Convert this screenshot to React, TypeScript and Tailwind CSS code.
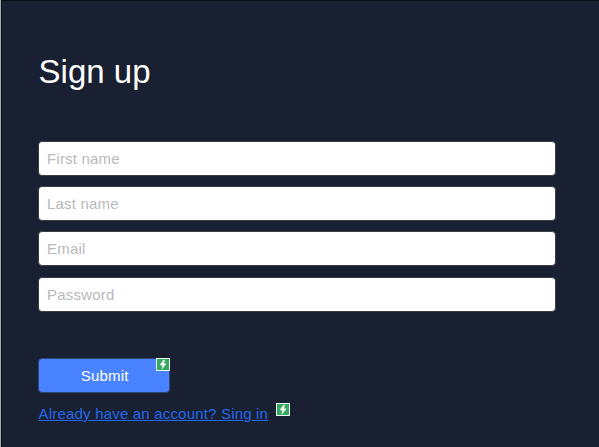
import React from "react";

const fields = [
  { name: "First name", type: "text", gap: "mb-[10px]" },
  { name: "Last name", type: "text", gap: "mb-[10px]" },
  { name: "Email", type: "email", gap: "mb-[11px]" },
  { name: "Password", type: "password", gap: "" },
];

function BoltBadge({ className }: { className: string }) {
  return (
    <svg className={className} width="14" height="13" viewBox="0 0 14 13" aria-hidden="true">
      <rect width="14" height="13" fill="#f1f7f3" />
      <rect x="1" y="1" width="12" height="11" fill="#35a862" />
      <path d="M7.6 2 4 7.1h2.5L5.9 11.2l4.2-5.5H7.7L8.6 2Z" fill="#fff" stroke="#fff" strokeWidth=".4" />
    </svg>
  );
}

export default function App() {
  return (
    <main className="h-[447px] w-[599px] overflow-hidden border-l border-[#a5adb0] bg-[#182031] font-['Liberation_Sans',Arial,sans-serif]">
      <div className="h-full border-t border-l border-[#080f18] pt-[49px] pl-[36px]">
        <h1 className="h-[44px] pl-[0.6px] text-[33px] leading-[44px] text-white">Sign up</h1>
        <form className="mt-[47px]">
          <div className="flex w-[518px] flex-col">
            {fields.map((field) => (
              <input
                key={field.name}
                type={field.type}
                placeholder={field.name}
                className={`h-[35.1px] w-full rounded-[4px] border border-[#3b3d43] bg-white px-[8px] text-[15px] tracking-[0.2px] text-black placeholder:text-[#b9b9b9] ${field.gap}`}
              />
            ))}
          </div>
          <div className="relative mt-[45.6px] w-[132px]">
            <button type="button" className="block h-[35px] w-full rounded-[4px] border border-[#30476f] bg-[#4a83ff] pl-[1.5px] text-[15px] leading-[33px] tracking-[0.2px] text-white">
              Submit
            </button>
            <BoltBadge className="absolute top-0 right-0" />
          </div>
          <div className="mt-[9px] flex items-start">
            <a href="#" className="ml-[0.6px] text-[15px] leading-[24px] tracking-[0.19px] whitespace-nowrap text-[#2668ed] underline">
              Already have an account? Sing in
            </a>
            <BoltBadge className="mt-px ml-[8px]" />
          </div>
        </form>
      </div>
    </main>
  );
}
